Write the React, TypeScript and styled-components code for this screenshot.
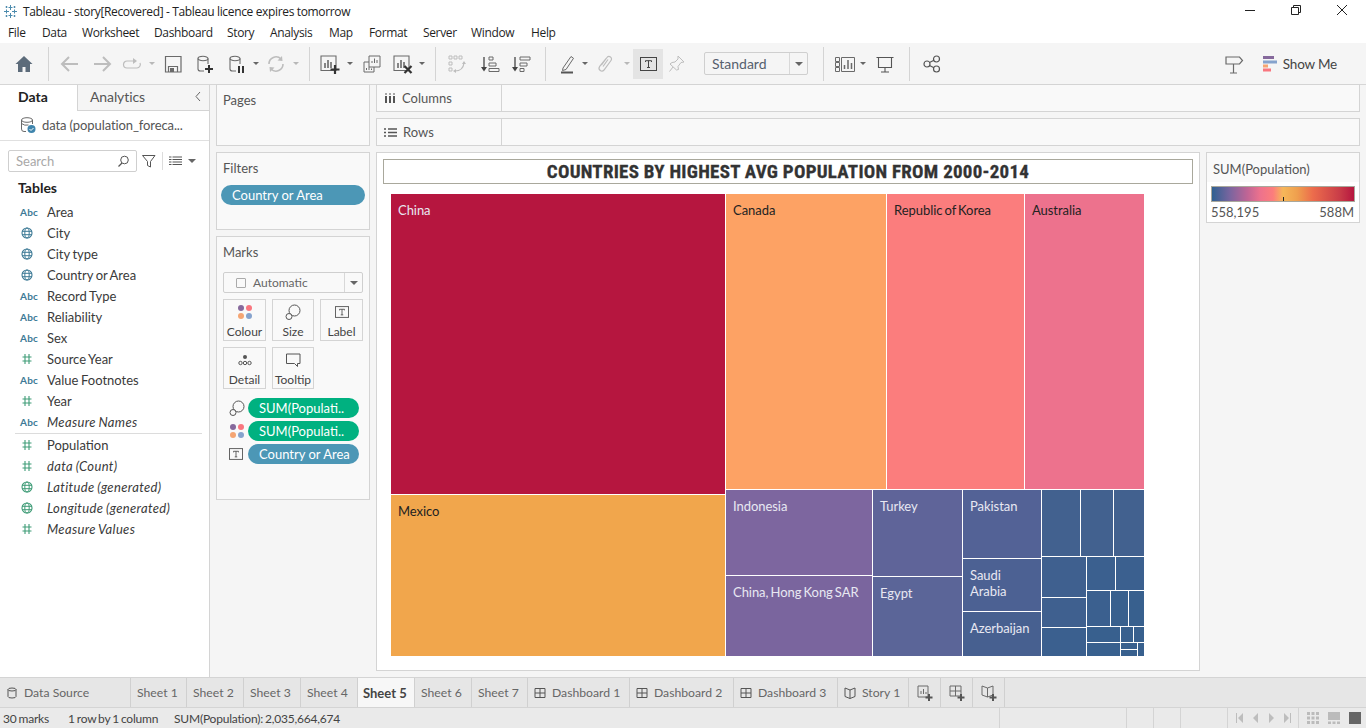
import React from "react";
import styled, { createGlobalStyle } from "styled-components";

const UI_FONT = `"Open Sans", "Noto Sans", sans-serif`;
const TAB_FONT = `Lato, "Open Sans", sans-serif`;

const GlobalStyle = createGlobalStyle`
    html, body { margin: 0; padding: 0; overflow: hidden; background: #f5f5f5; }
    * { box-sizing: border-box; }
`;

const Page = styled.div`
    width: 1366px;
    height: 728px;
    display: flex;
    flex-direction: column;
    font-family: ${TAB_FONT};
    overflow: hidden;
    color: #333;
`;

const TitleBar = styled.div`
    height: 22px;
    background: #fff;
    display: flex;
    align-items: center;
    padding-left: 3px;
    font: 12px ${UI_FONT};
    color: #222;
`;
const TitleText = styled.span`
    margin-left: 5px;
    letter-spacing: -0.35px;
    flex: 1;
`;
const WinButtons = styled.div`
    display: flex;
    align-items: center;
    gap: 34px;
    padding: 0 18px 2px 0;
`;

const MenuBar = styled.div`
    height: 21px;
    background: #fff;
    display: flex;
    align-items: center;
    padding-left: 8px;
    font: 12px ${UI_FONT};
    color: #1f1f1f;
`;
const MenuItem = styled.span<{ $w: number }>`
    width: ${(p) => p.$w}px;
    letter-spacing: -0.35px;
`;

const Toolbar = styled.div`
    height: 42px;
    background: #f5f5f5;
    border-bottom: 1px solid #d6d6d6;
    display: flex;
    align-items: center;
    padding-left: 8px;
`;
const ToolGroup = styled.div<{ $w: number; $pad: number }>`
    width: ${(p) => p.$w}px;
    padding-left: ${(p) => p.$pad}px;
    height: 36px;
    display: flex;
    align-items: center;
    flex: none;
`;
const ToolSep = styled.div`
    width: 1px;
    height: 34px;
    background: #d4d4d4;
    flex: none;
`;
const ToolSlot = styled.div<{ $w: number; $active?: boolean }>`
    width: ${(p) => p.$w}px;
    height: 30px;
    display: flex;
    align-items: center;
    justify-content: center;
    flex: none;
    background: ${(p) => (p.$active ? "#e4e4e4" : "transparent")};
`;
const Caret = styled.span<{ $light?: boolean; $big?: boolean }>`
    width: 0;
    height: 0;
    border-left: ${(p) => (p.$big ? 4 : 3)}px solid transparent;
    border-right: ${(p) => (p.$big ? 4 : 3)}px solid transparent;
    border-top: ${(p) => (p.$big ? 4 : 3)}px solid ${(p) => (p.$light ? "#b8b8b8" : "#666")};
    flex: none;
`;
const StandardBox = styled.div`
    width: 104px;
    height: 23px;
    margin-left: 13px;
    border: 1px solid #cfcfcf;
    border-radius: 2px;
    display: flex;
    align-items: center;
    font-size: 14px;
    color: #55606e;
    background: #f5f5f5;
    flex: none;
`;
const StandardLabel = styled.span`
    flex: 1;
    padding-left: 7px;
`;
const StandardArrow = styled.div`
    width: 18px;
    height: 21px;
    border-left: 1px solid #d8d8d8;
    display: flex;
    align-items: center;
    justify-content: center;
`;
const ShowMe = styled.div`
    margin-left: auto;
    display: flex;
    align-items: center;
    padding-right: 29px;
    font-size: 13.5px;
    letter-spacing: -0.2px;
    color: #444;
    gap: 5px;
`;
const SignSlot = styled.div`
    margin-right: 13px;
`;

const Main = styled.div`
    height: 592px;
    display: flex;
    background: #f5f5f5;
`;

const DataPane = styled.div`
    width: 210px;
    flex: none;
    background: #fff;
    border-right: 1px solid #d4d4d4;
    display: flex;
    flex-direction: column;
`;
const PaneTabs = styled.div`
    height: 26px;
    display: flex;
    font-size: 14px;
`;
const DataTab = styled.div`
    width: 77px;
    font-weight: 700;
    color: #222;
    padding: 3px 0 0 18px;
`;
const AnalyticsTab = styled.div`
    flex: 1;
    background: #f5f5f5;
    border-left: 1px solid #d4d4d4;
    border-bottom: 1px solid #d4d4d4;
    color: #555;
    padding: 3px 6px 0 12px;
    display: flex;
    justify-content: space-between;
    letter-spacing: -0.1px;
`;
const SourceRow = styled.div`
    height: 30px;
    border-bottom: 1px solid #e0e0e0;
    display: flex;
    align-items: center;
    padding: 0 0 2px 19px;
    gap: 5px;
    font-size: 13px;
    letter-spacing: -0.1px;
    color: #555;
`;
const SearchRow = styled.div`
    display: flex;
    align-items: center;
    padding: 9px 0 0 8px;
`;
const SearchBox = styled.div`
    width: 129px;
    height: 22px;
    border: 1px solid #cfcfcf;
    border-radius: 2px;
    display: flex;
    align-items: center;
    justify-content: space-between;
    padding: 0 6px 0 7px;
    font-size: 13px;
    color: #a8a8a8;
`;
const SearchTools = styled.div`
    display: flex;
    align-items: center;
    margin-left: 5px;
    gap: 6px;
`;
const ThinSep = styled.div`
    width: 1px;
    height: 18px;
    background: #dcdcdc;
`;
const TablesHeading = styled.div`
    font-size: 14px;
    font-weight: 700;
    color: #222;
    padding: 7px 0 5px 18px;
`;
const FieldRow = styled.div<{ $italic?: boolean }>`
    height: 21px;
    display: flex;
    align-items: center;
    font-size: 13px;
    color: #3a3a3a;
    word-spacing: -0.8px;
    font-style: ${(p) => (p.$italic ? "italic" : "normal")};
    letter-spacing: ${(p) => (p.$italic ? "0.35px" : "0")};
`;
const FieldIcon = styled.span`
    width: 47px;
    padding-left: 21px;
    display: flex;
    align-items: center;
    flex: none;
`;
const AbcIcon = styled.span`
    margin-left: -1px;
    font: 700 10px ${TAB_FONT};
    font-style: normal;
    color: #3d7a96;
    letter-spacing: 0.2px;
`;
const FieldDivider = styled.div`
    height: 1px;
    background: #dcdcdc;
    margin: 1px 7px 0 15px;
`;

const Shelves = styled.div`
    width: 166px;
    flex: none;
    margin-top: -1px;
    padding: 0 6px;
    display: flex;
    flex-direction: column;
    gap: 6px;
`;
const Card = styled.div<{ $h: number }>`
    height: ${(p) => p.$h}px;
    background: #f9f9f9;
    border: 1px solid #d4d4d4;
    flex: none;
`;
const CardTitle = styled.div`
    font-size: 13px;
    color: #555;
    padding: 7px 0 0 6px;
`;
const FilterPill = styled.div`
    margin: 9px 4px 0 4px;
`;
const Pill = styled.div<{ $color: string }>`
    height: 20px;
    border-radius: 10px;
    background: ${(p) => p.$color};
    color: #fff;
    font-size: 13px;
    line-height: 20px;
    padding-left: 11px;
    white-space: nowrap;
    flex: 1;
`;
const MarkTypeBox = styled.div`
    margin: 12px 6px 0 6px;
    height: 21px;
    border: 1px solid #cfcfcf;
    border-radius: 2px;
    display: flex;
    align-items: center;
    font-size: 12px;
    color: #666;
    background: #f9f9f9;
`;
const MarkTypeLabel = styled.span`
    flex: 1;
    display: flex;
    align-items: center;
    gap: 7px;
    padding-left: 12px;
`;
const MarkCheck = styled.span`
    width: 10px;
    height: 10px;
    border: 1px solid #aaa;
    border-radius: 1px;
`;
const MarkArrow = styled.span`
    width: 18px;
    height: 19px;
    border-left: 1px solid #d8d8d8;
    display: flex;
    align-items: center;
    justify-content: center;
`;
const MarkGrid = styled.div`
    margin: 6px 0 0 6px;
    display: grid;
    grid-template-columns: 43px 42px 43px;
    grid-auto-rows: 42px;
    column-gap: 6px;
    row-gap: 6px;
`;
const MarkButton = styled.div`
    border: 1px solid #d4d4d4;
    background: #f9f9f9;
    display: flex;
    flex-direction: column;
    align-items: center;
    font-size: 12px;
    color: #444;
`;
const MarkButtonIcon = styled.div`
    height: 24px;
    display: flex;
    align-items: center;
    justify-content: center;
    flex: none;
`;
const MarkPills = styled.div`
    margin: 9px 0 0 12px;
    display: flex;
    flex-direction: column;
    gap: 3px;
`;
const MarkPillRow = styled.div`
    display: flex;
    align-items: center;
    width: 130px;
`;
const MarkPillIcon = styled.span`
    width: 19px;
    display: flex;
    align-items: center;
    flex: none;
`;

const Workspace = styled.div`
    flex: 1;
    display: flex;
    flex-direction: column;
    margin-top: -1px;
    padding-right: 6px;
    gap: 6px;
    min-width: 0;
`;
const Shelf = styled.div`
    height: 28px;
    background: #f9f9f9;
    border: 1px solid #d4d4d4;
    display: flex;
    flex: none;
`;
const ShelfLabel = styled.div`
    width: 125px;
    border-right: 1px solid #d4d4d4;
    display: flex;
    align-items: center;
    gap: 6px;
    padding-left: 7px;
    font-size: 13px;
    color: #555;
`;
const ViewRow = styled.div`
    display: flex;
    gap: 6px;
    height: 519px;
    flex: none;
`;
const View = styled.div`
    width: 824px;
    background: #fff;
    border: 1px solid #d4d4d4;
    flex: none;
    padding: 6px 6px 0 6px;
`;
const ChartTitle = styled.div`
    height: 25px;
    border: 1px solid #a9a89c;
    display: flex;
    align-items: center;
    justify-content: center;
    font: 700 19px "Liberation Sans Narrow", "Roboto Condensed", Roboto, sans-serif;
    letter-spacing: 0.26px;
    -webkit-text-stroke: 0.3px #333;
    color: #333;
`;
const MapFrame = styled.div`
    width: 753px;
    height: 462px;
    margin: 10px 0 0 8px;
    display: flex;
    gap: 1px;
`;
const TileBox = styled.div<{ $size: number; $dir: string; $color?: string; $dark?: boolean; $label?: boolean }>`
    flex: 0 0 ${(p) => p.$size}px;
    min-width: 0;
    min-height: 0;
    display: ${(p) => (p.$label ? "block" : "flex")};
    flex-direction: ${(p) => p.$dir};
    gap: 1px;
    background: ${(p) => p.$color || "#fff"};
    color: ${(p) => (p.$dark ? "#222" : "#e8e8f2")};
    font-size: 13px;
    line-height: 16px;
    word-spacing: -1.2px;
    letter-spacing: -0.05px;
    padding: ${(p) => (p.$label ? "8px 7px" : "0")};
    white-space: pre-line;
`;

const Legend = styled.div`
    width: 154px;
    height: 71px;
    background: #fff;
    border: 1px solid #d4d4d4;
    flex: none;
`;
const LegendHead = styled.div`
    height: 29px;
    background: #f9f9f9;
    font-size: 13px;
    color: #555;
    padding: 8px 0 0 6px;
`;
const LegendBar = styled.div`
    position: relative;
    height: 16px;
    margin: 4px 4px 0 4px;
    border: 1px solid #a9a89c;
    background: linear-gradient(
        90deg,
        #2f6191 0%,
        #7c659f 13%,
        #c06595 25%,
        #ed728d 34%,
        #fc7d7c 43%,
        #f6b759 50%,
        #ef9f4e 60%,
        #ec6c4c 71%,
        #c93c48 90%,
        #b6163f 100%
    );
`;
const LegendTick = styled.span`
    position: absolute;
    left: 71px;
    bottom: 0;
    width: 1px;
    height: 4px;
    background: #222;
`;
const LegendScale = styled.div`
    display: flex;
    justify-content: space-between;
    padding: 2px 5px 0 4px;
    font-size: 13px;
    color: #555;
`;

const TabBar = styled.div`
    height: 31px;
    background: #e6e6e6;
    border-top: 1px solid #d4d4d4;
    border-bottom: 1px solid #d4d4d4;
    display: flex;
    font-size: 12.2px;
    color: #666;
    flex: none;
`;
const Tab = styled.div<{ $w: number; $active?: boolean; $center?: boolean }>`
    width: ${(p) => p.$w}px;
    border-right: 1px solid #d0d0d0;
    display: flex;
    align-items: center;
    justify-content: ${(p) => (p.$center ? "center" : "flex-start")};
    gap: 6px;
    padding-left: ${(p) => (p.$center ? 0 : p.$active ? 5 : 6)}px;
    flex: none;
    background: ${(p) => (p.$active ? "#f7f7f7" : "transparent")};
    font-size: ${(p) => (p.$active ? "13px" : "inherit")};
    font-weight: ${(p) => (p.$active ? 700 : 400)};
    color: ${(p) => (p.$active ? "#444" : "#666")};
`;
const StatusBar = styled.div`
    height: 20px;
    background: #eaeaea;
    display: flex;
    align-items: center;
    font-size: 12px;
    color: #444;
    flex: none;
`;
const StatusLeft = styled.div`
    width: 1000px;
    height: 100%;
    border-right: 1px solid #d4d4d4;
    display: flex;
    align-items: center;
    padding-left: 3px;
    word-spacing: -0.9px;
    letter-spacing: -0.2px;
`;
const StatusItem = styled.span<{ $w?: number }>`
    width: ${(p) => (p.$w ? `${p.$w}px` : "auto")};
`;
const StatusCell = styled.div<{ $w: number }>`
    width: ${(p) => p.$w}px;
    height: 100%;
    border-right: 1px solid #d4d4d4;
    display: flex;
    align-items: center;
`;
const ViewModes = styled.div`
    padding-left: 8px;
    display: flex;
    align-items: center;
    gap: 9px;
`;

const StyledSvg = styled.svg`
    display: block;
    flex: none;
`;

type IconProps = { children: React.ReactNode; size?: number; h?: number };
const Svg = ({ children, size = 20, h }: IconProps) => (
    <StyledSvg width={size} height={h ?? size} viewBox={`0 0 ${size} ${h ?? size}`} fill="none">
        {children}
    </StyledSvg>
);

const G = "#6a6a6a";
const D = "#555";
const L = "#bdbdbd";

const HomeIcon = () => (
    <Svg>
        <path d="M10 2 1.500 10H4v8h4.500v-5h3v5H16v-8h2.500z" fill="#5c6b7a" />
    </Svg>
);
const ArrowIcon = ({ flip }: { flip?: boolean }) => (
    <Svg>
        <g transform={flip ? "matrix(-1 0 0 1 20 0)" : undefined}>
            <path d="M2 10h16M9 3l-7 7 7 7" stroke={L} strokeWidth="2" />
        </g>
    </Svg>
);
const RedoIcon = () => (
    <Svg>
        <path d="M12 7H5a3.500 3.500 0 0 0 0 7h10a3.500 3.500 0 0 0 3-5" stroke={L} strokeWidth="1.200" />
        <path d="m11 4 4 3-4 3z" fill={L} />
    </Svg>
);
const SaveIcon = () => (
    <Svg>
        <path d="M2.500 2.500h15.500v15.500H2.500z" stroke={G} strokeWidth="1.200" />
        <path d="M5.500 18v-5.500h9V18" stroke={G} strokeWidth="1.200" />
        <path d="M7 14h4v4H7z" fill={G} />
    </Svg>
);
const CylinderIcon = ({ badge }: { badge: "plus" | "pause" }) => (
    <Svg>
        <ellipse cx="8" cy="4.500" rx="5" ry="2.200" stroke={G} strokeWidth="1.100" />
        <path d="M3 4.500V15q0 2 2.500 2H9M13 4.500V10" stroke={G} strokeWidth="1.100" />
        {badge === "plus" ? (
            <path d="M14 11v8M10 15h8" stroke="#333" strokeWidth="2" />
        ) : (
            <path d="M12 12v7M16 12v7" stroke="#333" strokeWidth="2" />
        )}
    </Svg>
);
const RefreshIcon = () => (
    <Svg>
        <path d="M3 10a7 7 0 0 1 12-5M17 10a7 7 0 0 1-12 5" stroke={L} strokeWidth="1.600" />
        <path d="m16 2 .5 5-5-.5zM4 18l-.5-5 5 .5z" fill={L} />
    </Svg>
);
const ChartBadgeIcon = ({ badge }: { badge: "plus" | "x" }) => (
    <Svg size={22}>
        <path d="M2 3h15v14.500H2z" stroke={G} strokeWidth="1.100" />
        <path d="M6 10v5M9 7v8M12 9v6" stroke={G} strokeWidth="1.600" />
        {badge === "plus" ? (
            <path d="M16 12v9M11.500 16.500h9" stroke="#333" strokeWidth="2.200" />
        ) : (
            <path d="m12.500 13 7 7M19.500 13l-7 7" stroke="#333" strokeWidth="2.200" />
        )}
    </Svg>
);
const DuplicateIcon = () => (
    <Svg>
        <path d="M7 2h11v11H7z" fill="#f5f5f5" stroke={G} />
        <path d="M10 9V7M12.500 9V4.500M15 9V6" stroke={G} />
        <path d="M2 8h5M2 8v10h10v-5" stroke={G} />
        <path d="M4.500 16v-2M7 16v-3M9.500 16v-1.500" stroke={G} />
    </Svg>
);
const SwapIcon = () => (
    <Svg>
        <path d="M2 2h3v3H2zM7 2h3v3H7zM12 2h3v3h-3zM2 8h3v3H2zM2 14h3v3H2z" stroke={L} />
        <path d="M8 17q8 0 9-8" stroke={L} strokeWidth="1.200" />
        <path d="m15 10 2-3 2 3zM9 15l-3 2 3 2z" fill={L} />
    </Svg>
);
const SortIcon = ({ desc }: { desc?: boolean }) => (
    <Svg>
        <path d="M4 3v13" stroke="#444" strokeWidth="1.300" />
        <path d="m1 13 3 4.500 3-4.500z" fill="#444" />
        {(desc
            ? ["M9 3h10v3H9z", "M9 9h7v3H9z", "M9 14.500h4v3H9z"]
            : ["M9 3h4v3H9z", "M9 9h7v3H9z", "M9 14.500h10v3H9z"]
        ).map((d) => (
            <path key={d} d={d} stroke={G} />
        ))}
    </Svg>
);
const PenIcon = () => (
    <Svg>
        <path d="M5 14 13 2.500l2.500 1.800L8 15.500l-3.500 1z" stroke={G} />
        <path d="M3 18.500h12" stroke={D} strokeWidth="2" />
    </Svg>
);
const ClipIcon = () => (
    <Svg>
        <path
            d="M6.500 11 12 3.500a2.500 2.500 0 0 1 4 3L9 16a2.800 2.800 0 0 1-4.500-3.300L11 4.500M8 12.500l5-7"
            stroke={L}
            strokeWidth="1.200"
        />
    </Svg>
);
const LabelIcon = ({ size = 17, h = 14 }: { size?: number; h?: number }) => (
    <StyledSvg width={size} height={h} viewBox="0 0 17 14" fill="none">
        <rect x="0.500" y="0.500" width="16" height="13" stroke="#444" />
        <path d="M5.500 5V3.700h6V5M8.500 3.700v6.800M7 10.500h3" stroke="#444" />
    </StyledSvg>
);
const PinIcon = () => (
    <Svg>
        <path d="M11 2l6 6-3 .5-3 4 .5 3-2 .5L3 10l2-1.500 3-.5 3-3zM6 13l-3.500 4.500" stroke={L} />
    </Svg>
);
const ShowLabelsIcon = () => (
    <Svg size={22} h={18}>
        <path d="M1.500 2.500h4v4h-4zM1.500 7.500h4v4h-4zM1.500 12.500h4v4h-4zM7.500 2.500h13v14h-13z" stroke={G} />
        <path d="M10.500 14v-4M14 14V5M17.500 14V8" stroke={G} strokeWidth="1.500" />
    </Svg>
);
const PresentIcon = () => (
    <Svg>
        <path d="M3.500 3.500h13v10h-13zM10 13.500V18M6 18h8M1.500 3.500h17" stroke={D} strokeWidth="1.100" />
    </Svg>
);
const ShareIcon = () => (
    <Svg size={18}>
        <circle cx="4" cy="9" r="3" stroke={D} strokeWidth="1.200" />
        <circle cx="13.500" cy="4" r="3" stroke={D} strokeWidth="1.200" />
        <circle cx="13.500" cy="14" r="3" stroke={D} strokeWidth="1.200" />
        <path d="m6.500 7.500 4.500-2.300M6.500 10.500l4.500 2.300" stroke={D} strokeWidth="1.200" />
    </Svg>
);
const SignIcon = () => (
    <Svg size={20}>
        <path d="M2 3h13.500l3 3.500-3 3.500H2zM9.500 10v9M6 19h7" stroke={G} strokeWidth="1.200" />
    </Svg>
);
const ShowMeIcon = () => (
    <Svg size={16} h={16}>
        <rect x="1" y="0" width="11" height="3" fill="#86699c" />
        <rect x="1" y="4.500" width="14" height="3" fill="#86a3cd" />
        <rect x="1" y="8.500" width="5" height="3" fill="#f5a573" />
        <rect x="1" y="12.500" width="8" height="3" fill="#f9767f" />
    </Svg>
);
const TableauLogo = () => (
    <Svg size={15}>
        <path
            d="M7.500 1v5M5.500 3.500h4M7.500 9v5M5.500 11.500h4M1 7.500h5M3.500 5.500v4M9 7.500h5M11.500 5.500v4M2.500 3h2M3.500 2v2M10.500 3h2M11.500 2v2M2.500 12h2M3.500 11v2M10.500 12h2M11.500 11v2"
            stroke="#4c8bad"
        />
    </Svg>
);
const MinIcon = () => (
    <Svg size={12} h={12}>
        <path d="M1 6.500h10" stroke="#222" />
    </Svg>
);
const MaxIcon = () => (
    <Svg size={12} h={12}>
        <path d="M1.500 3.500h7v7h-7zM3.500 3.500v-2h7v7h-2" stroke="#222" />
    </Svg>
);
const CloseIcon = () => (
    <Svg size={12} h={12}>
        <path d="m1 1 10 10M11 1 1 11" stroke="#222" />
    </Svg>
);
const DataSourceIcon = () => (
    <Svg size={18}>
        <ellipse cx="8" cy="4" rx="5.500" ry="2.300" stroke={G} />
        <path d="M2.500 4v9q0 2.500 2.500 2.500h2M13.500 4v4M2.500 7.500q3 2.500 7 1.500" stroke={G} />
        <circle cx="12.500" cy="13" r="4" fill="#3f85ad" />
        <path d="m10.500 13 1.500 1.500 2.500-2.500" stroke="#fff" />
    </Svg>
);
const DataSourceTabIcon = () => (
    <Svg size={12}>
        <ellipse cx="6" cy="2.500" rx="4" ry="1.500" stroke={D} />
        <path d="M2 2.500v7q0 1.500 4 1.500t4-1.500v-7" stroke={D} />
    </Svg>
);
const SearchIcon = () => (
    <Svg size={13}>
        <circle cx="7.500" cy="5" r="3.800" stroke={D} />
        <path d="M5 8 1.500 11.500" stroke={D} strokeWidth="1.200" />
    </Svg>
);
const FunnelIcon = () => (
    <Svg size={14}>
        <path d="M.5 1.500h12.500L8.500 7.500v5.500l-3-1.500V7.500z" stroke={D} />
    </Svg>
);
const ListIcon = () => (
    <Svg size={13} h={10}>
        <path d="M0 1h2.500M3.500 1H13M0 3.500h2.500M3.500 3.500H13M0 6h2.500M3.500 6H13M0 8.500h2.500M3.500 8.500H13" stroke={D} />
    </Svg>
);
const GlobeIcon = ({ color }: { color: string }) => (
    <Svg size={12}>
        <circle cx="6" cy="6" r="5" stroke={color} strokeWidth="1.100" />
        <ellipse cx="6" cy="6" rx="2.200" ry="5" stroke={color} />
        <path d="M1 4.300h10M1 7.700h10" stroke={color} />
    </Svg>
);
const HashIcon = () => (
    <Svg size={12}>
        <path d="M4 1v10M8 1v10M1.500 4h9M1.500 8h9" stroke="#3f9c77" strokeWidth="1.100" />
    </Svg>
);
const DotsIcon = () => (
    <Svg size={16}>
        <circle cx="4" cy="4" r="3" fill="#86699c" />
        <circle cx="12" cy="4" r="3" fill="#f9767f" />
        <circle cx="4" cy="12" r="3" fill="#f5a573" />
        <circle cx="12" cy="12" r="3" fill="#86a3cd" />
    </Svg>
);
const SizeIcon = () => (
    <Svg size={16}>
        <circle cx="9.500" cy="6.500" r="5.500" stroke={D} />
        <circle cx="4" cy="12.500" r="3" fill="#f9f9f9" stroke={D} />
    </Svg>
);
const DetailIcon = () => (
    <Svg size={16}>
        <circle cx="8" cy="5" r="2" fill={D} />
        <circle cx="3.500" cy="11" r="1.700" stroke={D} />
        <circle cx="8" cy="11" r="1.700" stroke={D} />
        <circle cx="12.500" cy="11" r="1.700" stroke={D} />
    </Svg>
);
const TooltipIcon = () => (
    <Svg size={16}>
        <path d="M1.500 2h13.500v9.500h-2.500v3l-3-3H1.500z" stroke={D} />
    </Svg>
);
const ColumnsIcon = () => (
    <Svg size={12}>
        <path d="M2 1.500v1M2 4v7M6 1.500v1M6 4v7M10 1.500v1M10 4v7" stroke="#555" strokeWidth="2" />
    </Svg>
);
const RowsIcon = () => (
    <Svg size={13}>
        <path d="M0 3h2M4 3h9M0 6.500h2M4 6.500h9M0 10h2M4 10h9" stroke="#555" strokeWidth="1.500" />
    </Svg>
);
const DashIcon = () => (
    <Svg size={12}>
        <path d="M1 1.500h10v9H1zM6 1.500v9M1 6h10" stroke={D} />
    </Svg>
);
const StoryIcon = () => (
    <Svg size={12}>
        <path d="M6 3 1 1v8.500L6 11.500l5-2V1zM6 3v8.500" stroke={D} />
    </Svg>
);
const NewTabIcon = ({ kind }: { kind: "sheet" | "dash" | "story" }) => (
    <Svg size={18}>
        {kind === "sheet" && <path d="M2 2h10v11H2zM5 10V7M7.500 10V5M10 10V8" stroke={G} />}
        {kind === "dash" && <path d="M2 2h11v10H2zM7.500 2v10M2 7h11" stroke={G} />}
        {kind === "story" && <path d="M7.500 4 2 2v9l5.500 2L13 11V2zM7.500 4v9" stroke={G} />}
        <path d="M13 10v7M9.500 13.500h7" stroke="#555" strokeWidth="2" />
    </Svg>
);
const PagerIcon = () => (
    <Svg size={71} h={12}>
        <path d="M8.500 1v10" stroke={L} />
        <path d="M15 1 10 6l5 5zM30 1l-5 5 5 5zM41 1l5 5-5 5zM56 1l5 5-5 5z" fill={L} />
        <path d="M62.500 1v10" stroke={L} />
    </Svg>
);
const GridModeIcon = () => (
    <Svg size={12}>
        <path
            d="M0 0h3v3H0zM4.500 0h3v3h-3zM9 0h3v3H9zM0 4.500h3v3H0zM4.500 4.500h3v3h-3zM9 4.500h3v3H9zM0 9h3v3H0zM4.500 9h3v3h-3zM9 9h3v3H9z"
            fill="#bbb"
        />
    </Svg>
);
const FilmModeIcon = () => (
    <Svg size={12}>
        <path d="M0 0h12v8H0zM0 9.500h3V12H0zM4.500 9.500h3V12h-3zM9 9.500h3V12H9z" fill="#bbb" />
    </Svg>
);
const FullModeIcon = () => (
    <Svg size={12}>
        <path d="M0 0h12v12H0z" fill="#666" />
    </Svg>
);

type TreeNode = {
    size: number;
    dir?: "row" | "column";
    color?: string;
    label?: string;
    dark?: boolean;
    kids?: TreeNode[];
};

const BLUE_A = "#42618f";
const BLUE_B = "#3f608f";
const BLUE_C = "#3b608f";
const BLUE_D = "#38608e";

const leaf = (size: number, color: string): TreeNode => ({ size, color });
const row = (size: number, kids: TreeNode[]): TreeNode => ({ size, dir: "row", kids });
const col = (size: number, kids: TreeNode[]): TreeNode => ({ size, dir: "column", kids });

// sizes are the pixel extents along the parent's axis
const treemap: TreeNode[] = [
    col(334, [
        { size: 300, color: "#b6163f", label: "China" },
        { size: 161, color: "#f1a64c", label: "Mexico", dark: true },
    ]),
    col(418, [
        row(295, [
            { size: 160, color: "#fda264", label: "Canada", dark: true },
            { size: 137, color: "#fb7d7d", label: "Republic of Korea", dark: true },
            { size: 119, color: "#ed728d", label: "Australia", dark: true },
        ]),
        row(166, [
            col(146, [
                { size: 85, color: "#7d669f", label: "Indonesia" },
                { size: 80, color: "#7a659e", label: "China, Hong Kong SAR" },
            ]),
            col(89, [
                { size: 86, color: "#5f6499", label: "Turkey" },
                { size: 79, color: "#5b6598", label: "Egypt" },
            ]),
            col(78, [
                { size: 68, color: "#536296", label: "Pakistan" },
                { size: 52, color: "#4c6193", label: "Saudi\nArabia" },
                { size: 44, color: "#476090", label: "Azerbaijan" },
            ]),
            col(102, [
                row(66, [leaf(38, BLUE_A), leaf(32, BLUE_A), leaf(30, BLUE_A)]),
                row(99, [
                    col(44, [leaf(40, BLUE_B), leaf(29, BLUE_B), leaf(28, BLUE_C)]),
                    col(57, [
                        row(33, [leaf(28, BLUE_C), leaf(28, BLUE_C)]),
                        row(35, [leaf(23, BLUE_C), leaf(17, BLUE_D), leaf(15, BLUE_D)]),
                        row(29, [
                            col(33, [leaf(15, BLUE_D), leaf(13, BLUE_D)]),
                            col(23, [
                                row(15, [leaf(12, BLUE_D), leaf(10, BLUE_D)]),
                                row(13, [col(16, [leaf(6, BLUE_D), leaf(6, BLUE_D)]), leaf(6, BLUE_D)]),
                            ]),
                        ]),
                    ]),
                ]),
            ]),
        ]),
    ]),
];

const Tile = ({ node }: { node: TreeNode }) => (
    <TileBox
        $size={node.size}
        $dir={node.dir ?? "row"}
        $color={node.color}
        $dark={node.dark}
        $label={!!node.label}
    >
        {node.label}
        {node.kids?.map((kid, i) => <Tile key={i} node={kid} />)}
    </TileBox>
);

const FIELDS: { name: string; icon: "abc" | "globe" | "hash" | "lat"; italic?: boolean }[] = [
    { name: "Area", icon: "abc" },
    { name: "City", icon: "globe" },
    { name: "City type", icon: "globe" },
    { name: "Country or Area", icon: "globe" },
    { name: "Record Type", icon: "abc" },
    { name: "Reliability", icon: "abc" },
    { name: "Sex", icon: "abc" },
    { name: "Source Year", icon: "hash" },
    { name: "Value Footnotes", icon: "abc" },
    { name: "Year", icon: "hash" },
    { name: "Measure Names", icon: "abc", italic: true },
];
const MEASURES: typeof FIELDS = [
    { name: "Population", icon: "hash" },
    { name: "data (Count)", icon: "hash", italic: true },
    { name: "Latitude (generated)", icon: "lat", italic: true },
    { name: "Longitude (generated)", icon: "lat", italic: true },
    { name: "Measure Values", icon: "hash", italic: true },
];

const Field = ({ name, icon, italic }: (typeof FIELDS)[number]) => (
    <FieldRow $italic={italic}>
        <FieldIcon>
            {icon === "abc" && <AbcIcon>Abc</AbcIcon>}
            {icon === "globe" && <GlobeIcon color="#3d7a96" />}
            {icon === "lat" && <GlobeIcon color="#3f9c77" />}
            {icon === "hash" && <HashIcon />}
        </FieldIcon>
        {name}
    </FieldRow>
);

const MENUS: [string, number][] = [
    ["File", 34],
    ["Data", 40],
    ["Worksheet", 72],
    ["Dashboard", 73],
    ["Story", 43],
    ["Analysis", 59],
    ["Map", 40],
    ["Format", 54],
    ["Server", 48],
    ["Window", 60],
    ["Help", 40],
];

const SHEETS: [string, number, boolean?][] = [
    ["Sheet 1", 56],
    ["Sheet 2", 57],
    ["Sheet 3", 57],
    ["Sheet 4", 57],
    ["Sheet 5", 57, true],
    ["Sheet 6", 57],
    ["Sheet 7", 56],
];

const App = (): React.JSX.Element => {
    return (
        <Page>
            <GlobalStyle />
            <TitleBar>
                <TableauLogo />
                <TitleText>Tableau - story[Recovered] - Tableau licence expires tomorrow</TitleText>
                <WinButtons>
                    <MinIcon />
                    <MaxIcon />
                    <CloseIcon />
                </WinButtons>
            </TitleBar>
            <MenuBar>
                {MENUS.map(([name, w]) => (
                    <MenuItem key={name} $w={w}>
                        {name}
                    </MenuItem>
                ))}
            </MenuBar>
            <Toolbar>
                <ToolGroup $w={40} $pad={0}>
                    <ToolSlot $w={32}>
                        <HomeIcon />
                    </ToolSlot>
                </ToolGroup>
                <ToolSep />
                <ToolGroup $w={260} $pad={7}>
                    <ToolSlot $w={28}>
                        <ArrowIcon />
                    </ToolSlot>
                    <ToolSlot $w={36}>
                        <ArrowIcon flip />
                    </ToolSlot>
                    <ToolSlot $w={24}>
                        <RedoIcon />
                    </ToolSlot>
                    <ToolSlot $w={16}>
                        <Caret $light />
                    </ToolSlot>
                    <ToolSlot $w={26}>
                        <SaveIcon />
                    </ToolSlot>
                    <ToolSlot $w={38}>
                        <CylinderIcon badge="plus" />
                    </ToolSlot>
                    <ToolSlot $w={26}>
                        <CylinderIcon badge="pause" />
                    </ToolSlot>
                    <ToolSlot $w={12}>
                        <Caret />
                    </ToolSlot>
                    <ToolSlot $w={28}>
                        <RefreshIcon />
                    </ToolSlot>
                    <ToolSlot $w={12}>
                        <Caret $light />
                    </ToolSlot>
                </ToolGroup>
                <ToolSep />
                <ToolGroup $w={125} $pad={6}>
                    <ToolSlot $w={28}>
                        <ChartBadgeIcon badge="plus" />
                    </ToolSlot>
                    <ToolSlot $w={12}>
                        <Caret />
                    </ToolSlot>
                    <ToolSlot $w={32}>
                        <DuplicateIcon />
                    </ToolSlot>
                    <ToolSlot $w={30}>
                        <ChartBadgeIcon badge="x" />
                    </ToolSlot>
                    <ToolSlot $w={8}>
                        <Caret />
                    </ToolSlot>
                </ToolGroup>
                <ToolSep />
                <ToolGroup $w={109} $pad={7}>
                    <ToolSlot $w={28}>
                        <SwapIcon />
                    </ToolSlot>
                    <ToolSlot $w={38}>
                        <SortIcon />
                    </ToolSlot>
                    <ToolSlot $w={24}>
                        <SortIcon desc />
                    </ToolSlot>
                </ToolGroup>
                <ToolSep />
                <ToolGroup $w={277} $pad={10}>
                    <ToolSlot $w={24}>
                        <PenIcon />
                    </ToolSlot>
                    <ToolSlot $w={10}>
                        <Caret />
                    </ToolSlot>
                    <ToolSlot $w={30}>
                        <ClipIcon />
                    </ToolSlot>
                    <ToolSlot $w={13}>
                        <Caret $light />
                    </ToolSlot>
                    <ToolSlot $w={30} $active>
                        <LabelIcon />
                    </ToolSlot>
                    <ToolSlot $w={28}>
                        <PinIcon />
                    </ToolSlot>
                    <StandardBox>
                        <StandardLabel>Standard</StandardLabel>
                        <StandardArrow>
                            <Caret $big />
                        </StandardArrow>
                    </StandardBox>
                </ToolGroup>
                <ToolSep />
                <ToolGroup $w={85} $pad={7}>
                    <ToolSlot $w={28}>
                        <ShowLabelsIcon />
                    </ToolSlot>
                    <ToolSlot $w={8}>
                        <Caret />
                    </ToolSlot>
                    <ToolSlot $w={36}>
                        <PresentIcon />
                    </ToolSlot>
                </ToolGroup>
                <ToolSep />
                <ToolGroup $w={40} $pad={8}>
                    <ToolSlot $w={28}>
                        <ShareIcon />
                    </ToolSlot>
                </ToolGroup>
                <ShowMe>
                    <SignSlot>
                        <SignIcon />
                    </SignSlot>
                    <ShowMeIcon />
                    Show Me
                </ShowMe>
            </Toolbar>
            <Main>
                <DataPane>
                    <PaneTabs>
                        <DataTab>Data</DataTab>
                        <AnalyticsTab>
                            Analytics
                            <Svg size={10} h={16}>
                                <path d="M7 4 3 8.500 7 13" stroke="#666" />
                            </Svg>
                        </AnalyticsTab>
                    </PaneTabs>
                    <SourceRow>
                        <DataSourceIcon />
                        data (population_foreca...
                    </SourceRow>
                    <SearchRow>
                        <SearchBox>
                            Search
                            <SearchIcon />
                        </SearchBox>
                        <SearchTools>
                            <FunnelIcon />
                            <ThinSep />
                            <ListIcon />
                            <Caret $big />
                        </SearchTools>
                    </SearchRow>
                    <TablesHeading>Tables</TablesHeading>
                    {FIELDS.map((f) => (
                        <Field key={f.name} {...f} />
                    ))}
                    <FieldDivider />
                    {MEASURES.map((f) => (
                        <Field key={f.name} {...f} />
                    ))}
                </DataPane>
                <Shelves>
                    <Card $h={62}>
                        <CardTitle>Pages</CardTitle>
                    </Card>
                    <Card $h={78}>
                        <CardTitle>Filters</CardTitle>
                        <FilterPill>
                            <Pill $color="#4c97b6">Country or Area</Pill>
                        </FilterPill>
                    </Card>
                    <Card $h={264}>
                        <CardTitle>Marks</CardTitle>
                        <MarkTypeBox>
                            <MarkTypeLabel>
                                <MarkCheck />
                                Automatic
                            </MarkTypeLabel>
                            <MarkArrow>
                                <Caret $big />
                            </MarkArrow>
                        </MarkTypeBox>
                        <MarkGrid>
                            <MarkButton>
                                <MarkButtonIcon>
                                    <DotsIcon />
                                </MarkButtonIcon>
                                Colour
                            </MarkButton>
                            <MarkButton>
                                <MarkButtonIcon>
                                    <SizeIcon />
                                </MarkButtonIcon>
                                Size
                            </MarkButton>
                            <MarkButton>
                                <MarkButtonIcon>
                                    <LabelIcon size={14} h={12} />
                                </MarkButtonIcon>
                                Label
                            </MarkButton>
                            <MarkButton>
                                <MarkButtonIcon>
                                    <DetailIcon />
                                </MarkButtonIcon>
                                Detail
                            </MarkButton>
                            <MarkButton>
                                <MarkButtonIcon>
                                    <TooltipIcon />
                                </MarkButtonIcon>
                                Tooltip
                            </MarkButton>
                        </MarkGrid>
                        <MarkPills>
                            <MarkPillRow>
                                <MarkPillIcon>
                                    <SizeIcon />
                                </MarkPillIcon>
                                <Pill $color="#00b180">SUM(Populati..</Pill>
                            </MarkPillRow>
                            <MarkPillRow>
                                <MarkPillIcon>
                                    <DotsIcon />
                                </MarkPillIcon>
                                <Pill $color="#00b180">SUM(Populati..</Pill>
                            </MarkPillRow>
                            <MarkPillRow>
                                <MarkPillIcon>
                                    <LabelIcon size={14} h={12} />
                                </MarkPillIcon>
                                <Pill $color="#4c97b6">Country or Area</Pill>
                            </MarkPillRow>
                        </MarkPills>
                    </Card>
                </Shelves>
                <Workspace>
                    <Shelf>
                        <ShelfLabel>
                            <ColumnsIcon />
                            Columns
                        </ShelfLabel>
                    </Shelf>
                    <Shelf>
                        <ShelfLabel>
                            <RowsIcon />
                            Rows
                        </ShelfLabel>
                    </Shelf>
                    <ViewRow>
                        <View>
                            <ChartTitle>COUNTRIES BY HIGHEST AVG POPULATION FROM 2000-2014</ChartTitle>
                            <MapFrame>
                                {treemap.map((n, i) => (
                                    <Tile key={i} node={n} />
                                ))}
                            </MapFrame>
                        </View>
                        <Legend>
                            <LegendHead>SUM(Population)</LegendHead>
                            <LegendBar>
                                <LegendTick />
                            </LegendBar>
                            <LegendScale>
                                <span>558,195</span>
                                <span>588M</span>
                            </LegendScale>
                        </Legend>
                    </ViewRow>
                </Workspace>
            </Main>
            <TabBar>
                <Tab $w={131}>
                    <DataSourceTabIcon />
                    Data Source
                </Tab>
                {SHEETS.map(([name, w, active]) => (
                    <Tab key={name} $w={w} $active={active}>
                        {name}
                    </Tab>
                ))}
                <Tab $w={102}>
                    <DashIcon />
                    Dashboard 1
                </Tab>
                <Tab $w={104}>
                    <DashIcon />
                    Dashboard 2
                </Tab>
                <Tab $w={104}>
                    <DashIcon />
                    Dashboard 3
                </Tab>
                <Tab $w={71}>
                    <StoryIcon />
                    Story 1
                </Tab>
                <Tab $w={32} $center>
                    <NewTabIcon kind="sheet" />
                </Tab>
                <Tab $w={32} $center>
                    <NewTabIcon kind="dash" />
                </Tab>
                <Tab $w={32} $center>
                    <NewTabIcon kind="story" />
                </Tab>
            </TabBar>
            <StatusBar>
                <StatusLeft>
                    <StatusItem $w={65}>30 marks</StatusItem>
                    <StatusItem $w={106}>1 row by 1 column</StatusItem>
                    <StatusItem>SUM(Population): 2,035,664,674</StatusItem>
                </StatusLeft>
                <StatusCell $w={127} />
                <StatusCell $w={27} />
                <StatusCell $w={27} />
                <StatusCell $w={47} />
                <StatusCell $w={71}>
                    <PagerIcon />
                </StatusCell>
                <ViewModes>
                    <GridModeIcon />
                    <FilmModeIcon />
                    <FullModeIcon />
                </ViewModes>
            </StatusBar>
        </Page>
    );
};

export default App;
